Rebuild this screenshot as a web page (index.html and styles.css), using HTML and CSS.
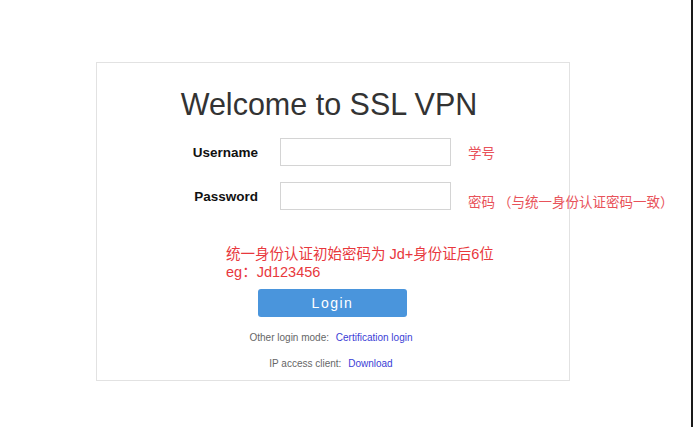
FILE: index.html
```html
<!DOCTYPE html>
<html lang="zh-CN">
<head>
  <meta charset="UTF-8">
  <meta name="viewport" content="width=device-width, initial-scale=1.0">
  <title>SSL VPN</title>
  <link rel="stylesheet" href="styles.css">
</head>
<body>
  <div class="page">
    <!-- Login panel -->
    <div class="panel">
      <h1 class="title">Welcome to SSL VPN</h1>

      <div class="row">
        <label class="label" for="username">Username</label>
        <input class="field" type="text" id="username">
        <span class="hint">学号</span>
      </div>

      <div class="row">
        <label class="label" for="password">Password</label>
        <input class="field" type="password" id="password">
        <span class="hint hint-low">密码 （与统一身份认证密码一致）</span>
      </div>

      <p class="note">统一身份认证初始密码为 Jd+身份证后6位<br>eg：Jd123456</p>

      <button class="login-btn" type="button">Login</button>

      <p class="extra">Other login mode: <a href="#">Certification login</a></p>
      <p class="extra extra-last">IP access client: <a href="#">Download</a></p>
    </div>
  </div>
</body>
</html>
```

FILE: styles.css
```css
/* Reset and body style */
body, html {
  margin: 0;
  padding: 0;
  background-color: #fff;
  font-family: "Liberation Sans", Arial, "Noto Sans CJK SC", sans-serif;
}

.page {
  min-height: 100vh;
  box-sizing: border-box;
  border-right: 2px solid #1a1a1a;
  padding-top: 62px;
  padding-left: 96px;
}

/* Panel */
.panel {
  width: 474px;
  box-sizing: border-box;
  border: 1px solid #e2e2e2;
  padding: 24px 0 9px;
}

.title {
  margin: 0;
  font-size: 30.5px;
  line-height: 34px;
  font-weight: normal;
  color: #333;
  text-align: center;
  padding-right: 8px;
}

/* Form rows */
.row {
  display: flex;
  align-items: center;
  margin-top: 17px;
}

.row + .row {
  margin-top: 15px;
}

.label {
  flex-shrink: 0;
  width: 161px;
  margin-right: 22px;
  text-align: right;
  font-size: 13.5px;
  font-weight: bold;
  color: #111;
}

.field {
  flex-shrink: 0;
  width: 171px;
  height: 28px;
  box-sizing: border-box;
  margin: 0;
  border: 1px solid #d4d4d4;
  background: #fff;
  outline: none;
}

.hint {
  flex-shrink: 0;
  margin-left: 17px;
  white-space: nowrap;
  font-family: "Noto Sans CJK SC", sans-serif;
  font-size: 13.5px;
  color: #e8525a;
}

.hint-low {
  padding-top: 10px;
}

/* Red notice */
.note {
  margin: 34px 0 0;
  padding-left: 129px;
  font-family: "Liberation Sans", "Noto Sans CJK SC", sans-serif;
  font-size: 14.5px;
  line-height: 18px;
  color: #e8383d;
}

.login-btn {
  display: block;
  width: 149px;
  height: 28px;
  margin: 8px 0 0 161px;
  border: none;
  border-radius: 3px;
  background-color: #4a95dc;
  color: #fff;
  font-family: "Liberation Sans", Arial, sans-serif;
  font-size: 14px;
  letter-spacing: 1.5px;
}

/* Other login options */
.extra {
  margin: 14px 0 0;
  font-size: 10px;
  line-height: 14px;
  color: #666;
  text-align: center;
  padding-right: 4px;
}

.extra-last {
  margin-top: 12px;
}

.extra a {
  margin-left: 4px;
  color: #3a40d6;
  text-decoration: none;
}
```
